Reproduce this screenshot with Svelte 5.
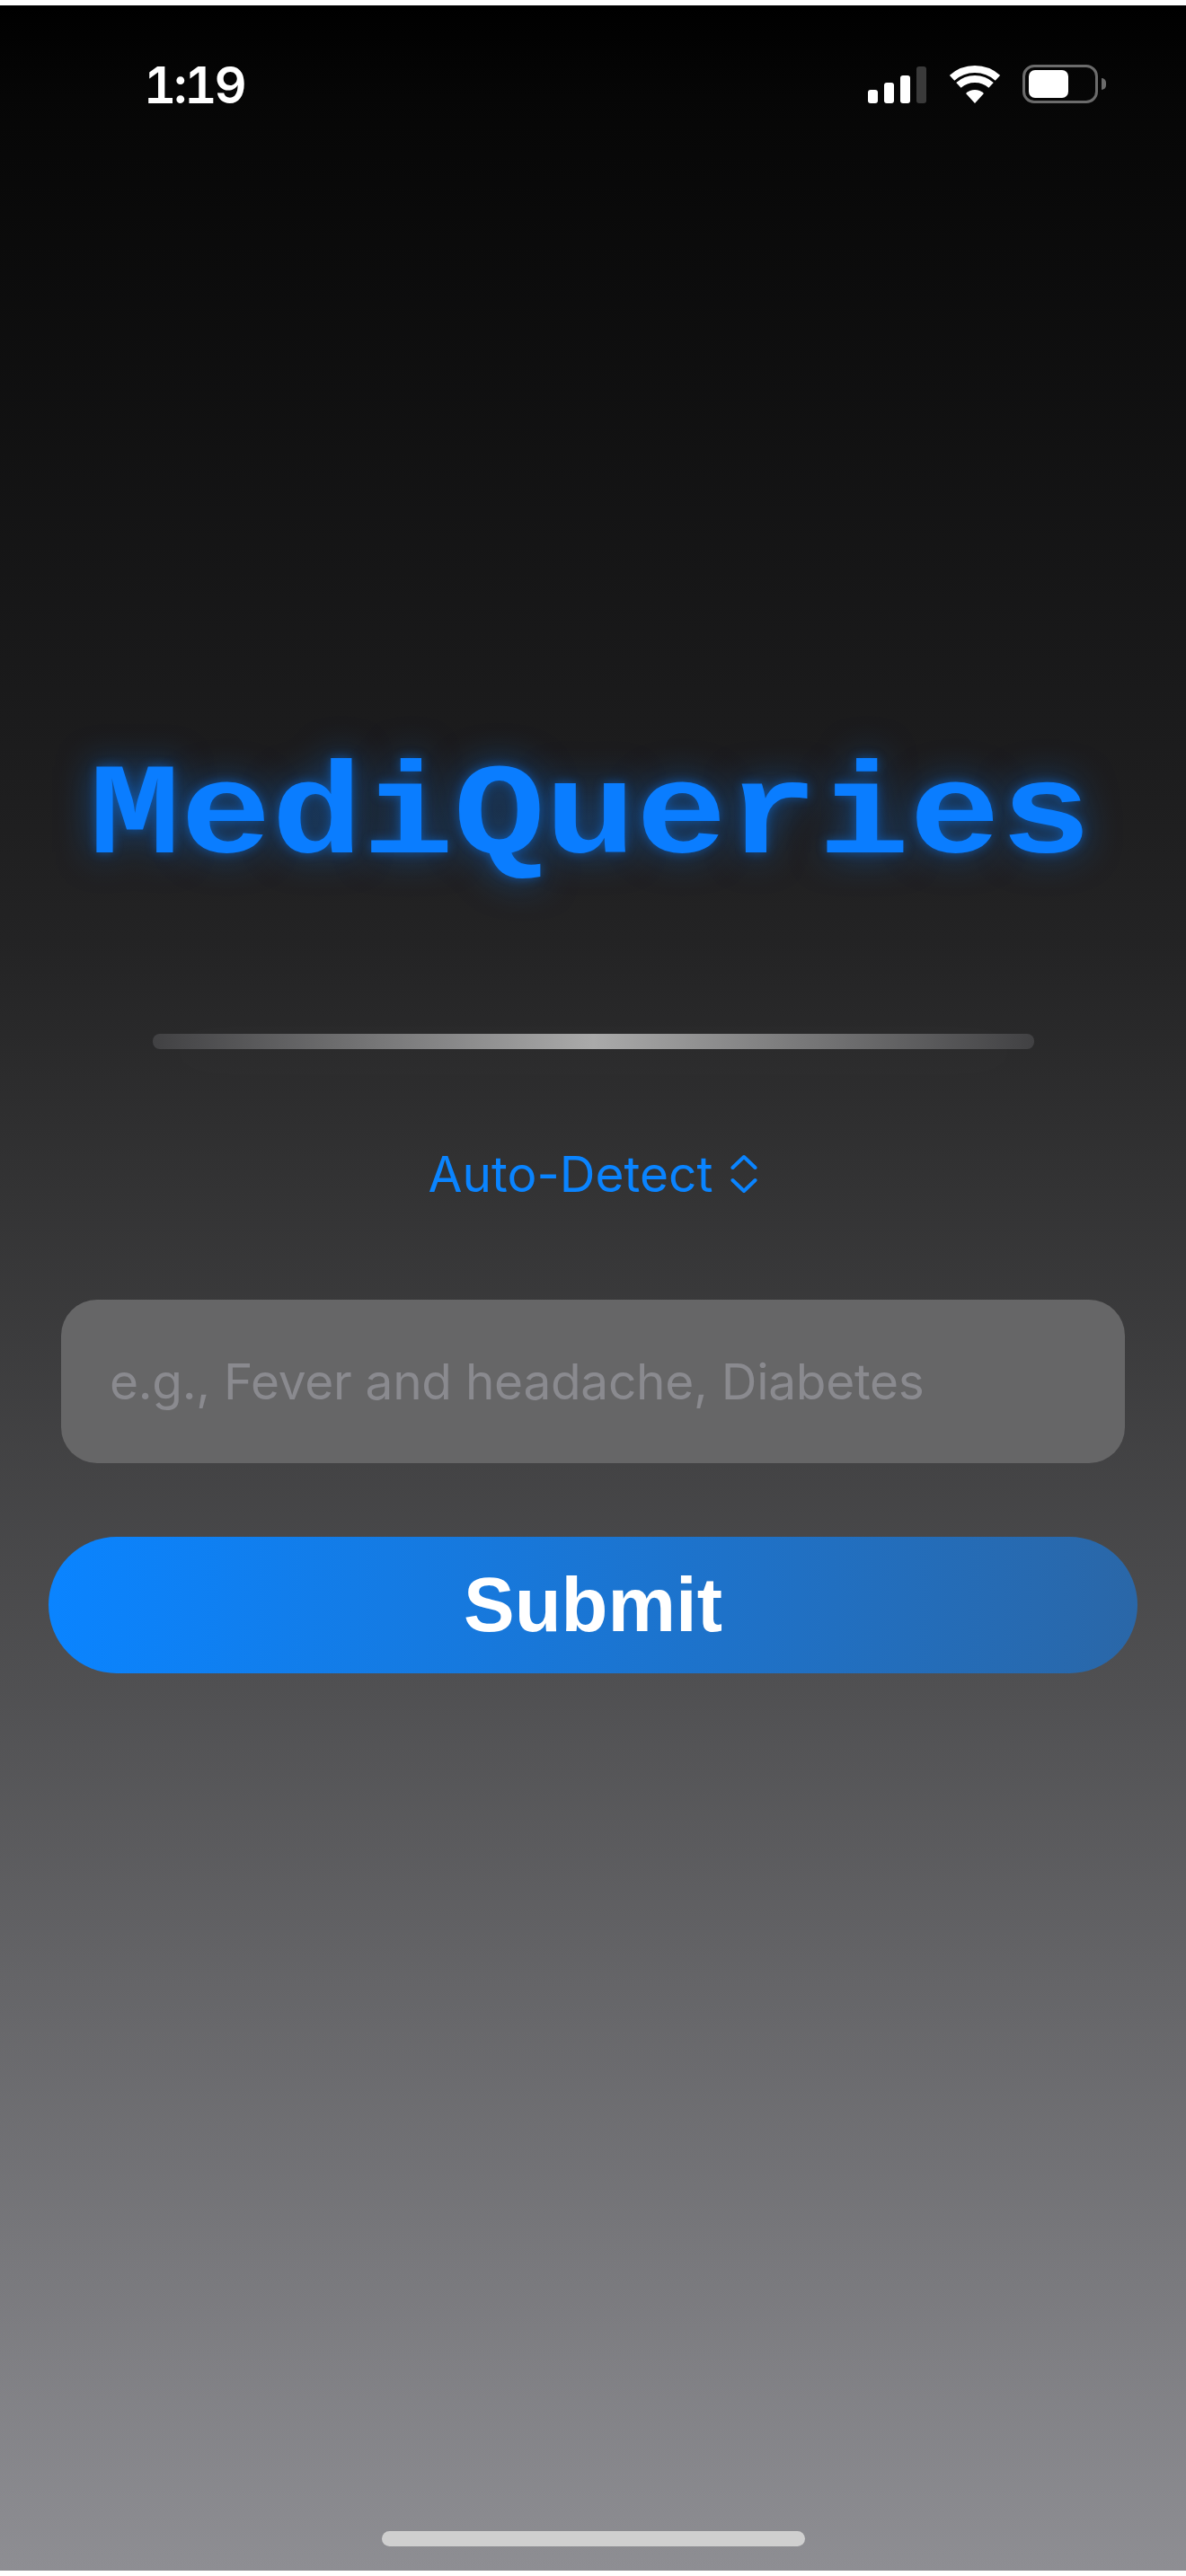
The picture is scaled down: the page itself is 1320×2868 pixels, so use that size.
<script lang="ts">
	let query = $state('');
</script>

<div class="screen">
	<!-- Status bar -->
	<header class="status">
		<span class="time">1:19</span>
		<div class="status-icons">
			<div class="signal">
				<span class="bar b1"></span>
				<span class="bar b2"></span>
				<span class="bar b3"></span>
				<span class="bar b4"></span>
			</div>
			<svg class="wifi" width="56" height="42" viewBox="0 0 56 42" fill="none">
				<path d="M2.6 13.8A38 38 0 0 1 53.4 13.8" stroke="#fff" stroke-width="8" />
				<path d="M9.9 21.9A27 27 0 0 1 46.1 21.9" stroke="#fff" stroke-width="8" />
				<path d="M28 42L18 30.9A15 15 0 0 1 38 30.9Z" fill="#fff" />
			</svg>
			<div class="battery">
				<div class="battery-body"><div class="battery-fill"></div></div>
				<div class="battery-nub"></div>
			</div>
		</div>
	</header>

	<main class="content">
		<h1 class="title">MediQueries</h1>

		<div class="divider"></div>

		<button class="picker" type="button">
			<span>Auto-Detect</span>
			<svg width="30" height="44" viewBox="0 0 30 44" fill="none" stroke="#0a84ff" stroke-width="4" stroke-linecap="round" stroke-linejoin="round">
				<path d="M2.5 15L15 3L27.5 15" />
				<path d="M2.5 29L15 41L27.5 29" />
			</svg>
		</button>

		<input class="symptoms" type="text" placeholder="e.g., Fever and headache, Diabetes" bind:value={query} />

		<button class="submit" type="button">Submit</button>
	</main>

	<div class="home-indicator"></div>
</div>

<style>
	:global(body) {
		background: #fff;
	}

	.screen {
		margin-top: 6px;
		height: 2856px;
		display: flex;
		flex-direction: column;
		background: linear-gradient(
			180deg,
			#000 0,
			#060606 100px,
			#1b1b1c 794px,
			#232324 1040px,
			#323233 1300px,
			#505052 1874px,
			#8e8e93 2856px
		);
		overflow: hidden;
	}

	/* status bar */
	.status {
		display: flex;
		justify-content: space-between;
		align-items: flex-start;
		padding: 64px 89px 0 160px;
		height: 50px;
	}

	.time {
		font-family: 'Inter', sans-serif;
		font-size: 56px;
		font-weight: 600;
		line-height: 50px;
		font-variant-numeric: tabular-nums;
		letter-spacing: -3px;
		color: #fff;
	}

	.status-icons {
		display: flex;
		align-items: flex-end;
		padding-top: 2px;
	}

	.signal {
		display: flex;
		align-items: flex-end;
		gap: 7px;
		height: 42px;
		margin-right: 26px;
	}

	.bar {
		width: 11px;
		background: #fff;
		border-radius: 3px;
	}

	.b1 { height: 15px; }
	.b2 { height: 23px; }
	.b3 { height: 31px; }
	.b4 { height: 41px; background: #3a3a3a; }

	.wifi {
		display: block;
		margin-right: 25px;
	}

	.battery {
		display: flex;
		align-items: center;
		height: 43px;
	}

	.battery-body {
		box-sizing: border-box;
		width: 84px;
		height: 43px;
		border: 3px solid #6b6b6b;
		border-radius: 13px;
		padding: 3px 4px;
	}

	.battery-fill {
		width: 44px;
		height: 100%;
		background: #fff;
		border-radius: 7px;
	}

	.battery-nub {
		width: 5px;
		height: 13px;
		margin-left: 4px;
		background: #6b6b6b;
		border-radius: 0 6px 6px 0;
	}

	/* main column */
	.content {
		flex: 1;
		display: flex;
		flex-direction: column;
		align-items: center;
		padding-top: 701px;
	}

	.title {
		margin: 0;
		padding-right: 6px;
		font-family: 'Liberation Mono', 'Courier New', monospace;
		font-size: 167px;
		font-weight: 700;
		line-height: 167px;
		color: #0a7dff;
		text-shadow: 0 0 12px rgba(10, 125, 255, 0.45), 0 0 44px rgba(10, 125, 255, 0.5);
		/* Liberation Mono is taller than the Courier in the shot */
		transform: scale(1.012, 0.865);
		transform-origin: 50% 128px;
	}

	.divider {
		width: 981px;
		height: 17px;
		margin-top: 163px;
		border-radius: 8px;
		background: linear-gradient(90deg, #414143 0%, #aaaaaa 50%, #414143 100%);
		box-shadow: 0 10px 70px rgba(255, 255, 255, 0.05);
	}

	.picker {
		display: flex;
		align-items: center;
		gap: 20px;
		margin-top: 106px;
		padding: 0;
		border: 0;
		background: none;
		font-family: 'Inter', sans-serif;
		font-size: 55px;
		line-height: 66px;
		color: #0a84ff;
	}

	.symptoms {
		box-sizing: border-box;
		width: 1184px;
		height: 182px;
		margin-top: 107px;
		padding: 0 54px;
		border: 0;
		border-radius: 40px;
		background: #666667;
		font-family: 'Inter', sans-serif;
		font-size: 55px;
		letter-spacing: -0.3px;
		color: #fff;
		outline: none;
	}

	.symptoms::placeholder {
		color: #8a8a8f;
		opacity: 1;
	}

	.submit {
		width: 1212px;
		height: 152px;
		margin-top: 82px;
		border: 0;
		border-radius: 76px;
		background: linear-gradient(90deg, #0a84ff 0%, #2a67a8 100%);
		font-family: 'Liberation Sans', Arial, sans-serif;
		font-size: 85px;
		font-weight: 700;
		color: #fff;
	}

	.home-indicator {
		align-self: center;
		width: 471px;
		height: 17px;
		margin-bottom: 27px;
		border-radius: 9px;
		background: #cfcfcf;
	}
</style>
